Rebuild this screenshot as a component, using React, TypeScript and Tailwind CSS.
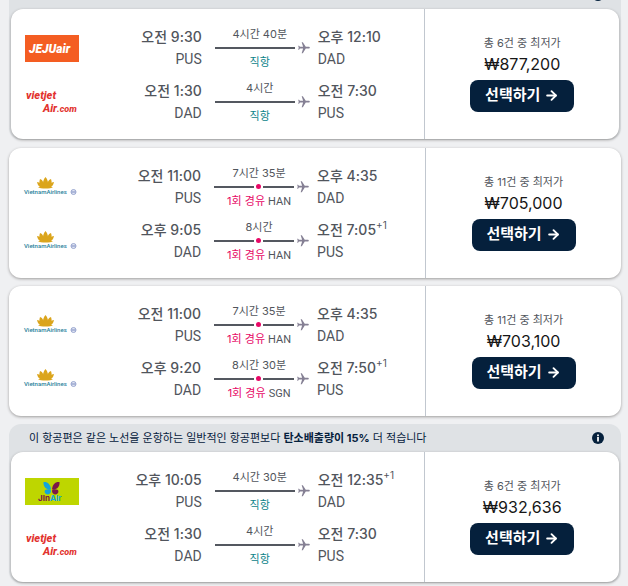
import React from "react";
import { ArrowRight } from "lucide-react";
import { MdFlight } from "react-icons/md";

type Airline = "jeju" | "vietjet" | "vietnam" | "jin";

interface Leg {
  airline: Airline;
  depart: string;
  from: string;
  duration: string;
  stop?: string;
  arrive: string;
  to: string;
  nextDay?: boolean;
}

interface Offer {
  legs: Leg[];
  count: number;
  price: string;
}

const offers: Offer[] = [
  {
    legs: [
      { airline: "jeju", depart: "오전 9:30", from: "PUS", duration: "4시간 40분", arrive: "오후 12:10", to: "DAD" },
      { airline: "vietjet", depart: "오전 1:30", from: "DAD", duration: "4시간", arrive: "오전 7:30", to: "PUS" },
    ],
    count: 6,
    price: "₩877,200",
  },
  {
    legs: [
      { airline: "vietnam", depart: "오전 11:00", from: "PUS", duration: "7시간 35분", stop: "HAN", arrive: "오후 4:35", to: "DAD" },
      { airline: "vietnam", depart: "오후 9:05", from: "DAD", duration: "8시간", stop: "HAN", arrive: "오전 7:05", to: "PUS", nextDay: true },
    ],
    count: 11,
    price: "₩705,000",
  },
  {
    legs: [
      { airline: "vietnam", depart: "오전 11:00", from: "PUS", duration: "7시간 35분", stop: "HAN", arrive: "오후 4:35", to: "DAD" },
      { airline: "vietnam", depart: "오후 9:20", from: "DAD", duration: "8시간 30분", stop: "SGN", arrive: "오전 7:50", to: "PUS", nextDay: true },
    ],
    count: 11,
    price: "₩703,100",
  },
  {
    legs: [
      { airline: "jin", depart: "오후 10:05", from: "PUS", duration: "4시간 30분", arrive: "오전 12:35", to: "DAD", nextDay: true },
      { airline: "vietjet", depart: "오전 1:30", from: "DAD", duration: "4시간", arrive: "오전 7:30", to: "PUS" },
    ],
    count: 6,
    price: "₩932,636",
  },
];

function Logo({ airline }: { airline: Airline }) {
  if (airline === "jeju") {
    return (
      <svg viewBox="0 0 54 27" className="h-[27px] w-[54px]" role="img" aria-label="제주항공">
        <rect width="54" height="27" fill="#f45d22" />
        <text x="4" y="18" fontFamily="Roboto" fontSize="12" fontWeight="900" fontStyle="italic" fill="#fff">JEJUair</text>
      </svg>
    );
  }
  if (airline === "vietjet") {
    return (
      <svg viewBox="0 0 54 27" className="h-[27px] w-[54px]" role="img" aria-label="비엣젯항공">
        <g fontFamily="Roboto" fontWeight="800" fontStyle="italic" fill="#e2322e">
          <text x="1" y="10" fontSize="11">vietjet</text>
          <text x="18" y="23" fontSize="11">
            Air<tspan fontSize="9">.com</tspan>
          </text>
        </g>
      </svg>
    );
  }
  if (airline === "jin") {
    return (
      <svg viewBox="0 0 54 27" className="h-[27px] w-[54px]" role="img" aria-label="진에어">
        <rect width="54" height="27" fill="#bed600" />
        <path d="M18.500 4c4-.5 7 2 7.500 7.500-4 .5-8-2-7.500-7.500Z" fill="#12a5dc" />
        <path d="M34.500 4c-4-.5-7 2-7.500 7.500 4 .5 8-2 7.500-7.500Z" fill="#7b1748" />
        <path d="M20 12c3-1.500 6-1 6 1 0 3-3 4-5 3-1-1-2-2-1-4Z" fill="#12a5dc" />
        <path d="M33 12c-3-1.500-6-1-6 1 0 3 3 4 5 3 1-1 2-2 1-4Z" fill="#7b1748" />
        <text x="13" y="23" fontFamily="Inter" fontSize="8" fontWeight="700" fill="#7b1748">
          JIn<tspan fill="#12a5dc">AIr</tspan>
        </text>
      </svg>
    );
  }
  return (
    <svg viewBox="0 0 54 27" className="h-[27px] w-[54px]" role="img" aria-label="베트남항공">
      <g fill="#dba51c">
        <path d="M22.500 3c2 2 3 5 2.500 10h-5c-.5-5 .5-8 2.500-10Z" />
        <path d="M17 5c3 1 4 4 4 8h-3c-2-2-2-5-1-8Z" />
        <path d="M28 5c-3 1-4 4-4 8h3c2-2 2-5 1-8Z" />
        <path d="M14 8c3 0 5 2 7 6-4 0-6-2-7-6Z" />
        <path d="M31 8c-3 0-5 2-7 6 4 0 6-2 7-6Z" />
        <path d="M15 13h15c-2 2-13 2-15 0Z" />
      </g>
      <text x="1" y="20" fontFamily="Roboto" fontSize="6" fontWeight="500" fill="#28819b">VietnamAirlines</text>
      <circle cx="50.500" cy="18" r="2.500" fill="#dfe4f2" stroke="#9aa7d0" strokeWidth="1" />
      <path d="M48.500 18h4" stroke="#7c8cc0" />
    </svg>
  );
}

function InfoIcon() {
  return (
    <svg viewBox="0 0 12 12" className="size-3 shrink-0" aria-hidden="true">
      <circle cx="6" cy="6" r="6" fill="#05203c" />
      <rect x="5" y="2.500" width="2" height="1.700" fill="#dfe2e5" />
      <rect x="5" y="5" width="2" height="4.500" fill="#dfe2e5" />
    </svg>
  );
}

function LegRow({ leg }: { leg: Leg }) {
  return (
    <div className="flex h-11 items-center">
      <div className="mr-4 w-[54px] shrink-0">
        <Logo airline={leg.airline} />
      </div>
      <div className="flex-1 whitespace-nowrap text-right leading-[22px]">
        <p className="text-sm font-medium leading-[22px]">{leg.depart}</p>
        <p className="font-[Roboto,sans-serif] text-sm leading-[22px]">{leg.from}</p>
      </div>
      <div className="ml-[13px] mr-[7px] w-24 shrink-0 text-center text-[11px] leading-4">
        <p className="pr-[6px]">{leg.duration}</p>
        <div className="flex h-3 items-center gap-[2px]">
          <span className="h-[2px] flex-1 bg-[#545860]" />
          {leg.stop && (
            <>
              <span className="size-[5px] rounded-full bg-[#e70866]" />
              <span className="h-[2px] w-[31px] bg-[#545860]" />
            </>
          )}
          <MdFlight className="size-3.5 shrink-0 rotate-90 text-[#858094]" />
        </div>
        <p className="pr-[6px]">
          {leg.stop ? (
            <>
              <span className="text-[#e70866]">1회 경유</span> <span className="font-[Roboto,sans-serif]">{leg.stop}</span>
            </>
          ) : (
            <span className="text-[#0c838a]">직항</span>
          )}
        </p>
      </div>
      <div className="flex-1 whitespace-nowrap">
        <p className="flex text-sm font-medium leading-[22px]">
          {leg.arrive}
          {leg.nextDay && <sup className="top-0 text-[10px] font-normal leading-3">+1</sup>}
        </p>
        <p className="font-[Roboto,sans-serif] text-sm leading-[22px]">{leg.to}</p>
      </div>
    </div>
  );
}

function Card({ offer }: { offer: Offer }) {
  return (
    <article className="flex rounded-xl bg-white shadow-[0_1px_3px_rgba(37,32,31,0.4)]">
      <div className="flex w-[68%] flex-col gap-[10px] pb-[15px] pl-[14px] pt-[17px]">
        {offer.legs.map((leg, i) => (
          <LegRow key={i} leg={leg} />
        ))}
      </div>
      <div className="flex flex-1 flex-col items-center justify-center border-l border-[#c1c7cf] pb-[2px]">
        <p className="text-[11px] leading-[18px]">총 {offer.count}건 중 최저가</p>
        <p className="text-base leading-6 text-[#161616]">{offer.price}</p>
        <button
          type="button"
          className="mt-1 flex h-8 w-[104px] items-center justify-center gap-1 rounded-lg bg-[#05203c] pb-[2px] text-[15px] font-bold text-white"
        >
          선택하기
          <ArrowRight className="size-[15px]" strokeWidth={3} aria-hidden="true" />
        </button>
      </div>
    </article>
  );
}

export default function App() {
  return (
    <main className="flex flex-col gap-2 bg-[#eff0f2] pb-2 pl-[9px] pr-[7px] font-[Inter,'Noto_Sans_CJK_KR',sans-serif] text-[#51555c]">
      <section className="rounded-b-xl bg-[#dfe2e5] px-[2px] pb-px">
        <div className="flex h-[9px] items-start justify-end overflow-hidden pr-[15px]">
          <div className="-mt-[11px]">
            <InfoIcon />
          </div>
        </div>
        <Card offer={offers[0]} />
      </section>
      <Card offer={offers[1]} />
      <Card offer={offers[2]} />
      <section className="rounded-xl bg-[#dfe2e5] px-[2px] pb-px">
        <header className="flex h-7 items-center justify-between pl-[18px] pr-[15px] text-[11px] text-[#05203c]">
          <p>
            이 항공편은 같은 노선을 운항하는 일반적인 항공편보다 <strong className="font-bold">탄소배출량이 15%</strong> 더 적습니다
          </p>
          <InfoIcon />
        </header>
        <Card offer={offers[3]} />
      </section>
    </main>
  );
}
